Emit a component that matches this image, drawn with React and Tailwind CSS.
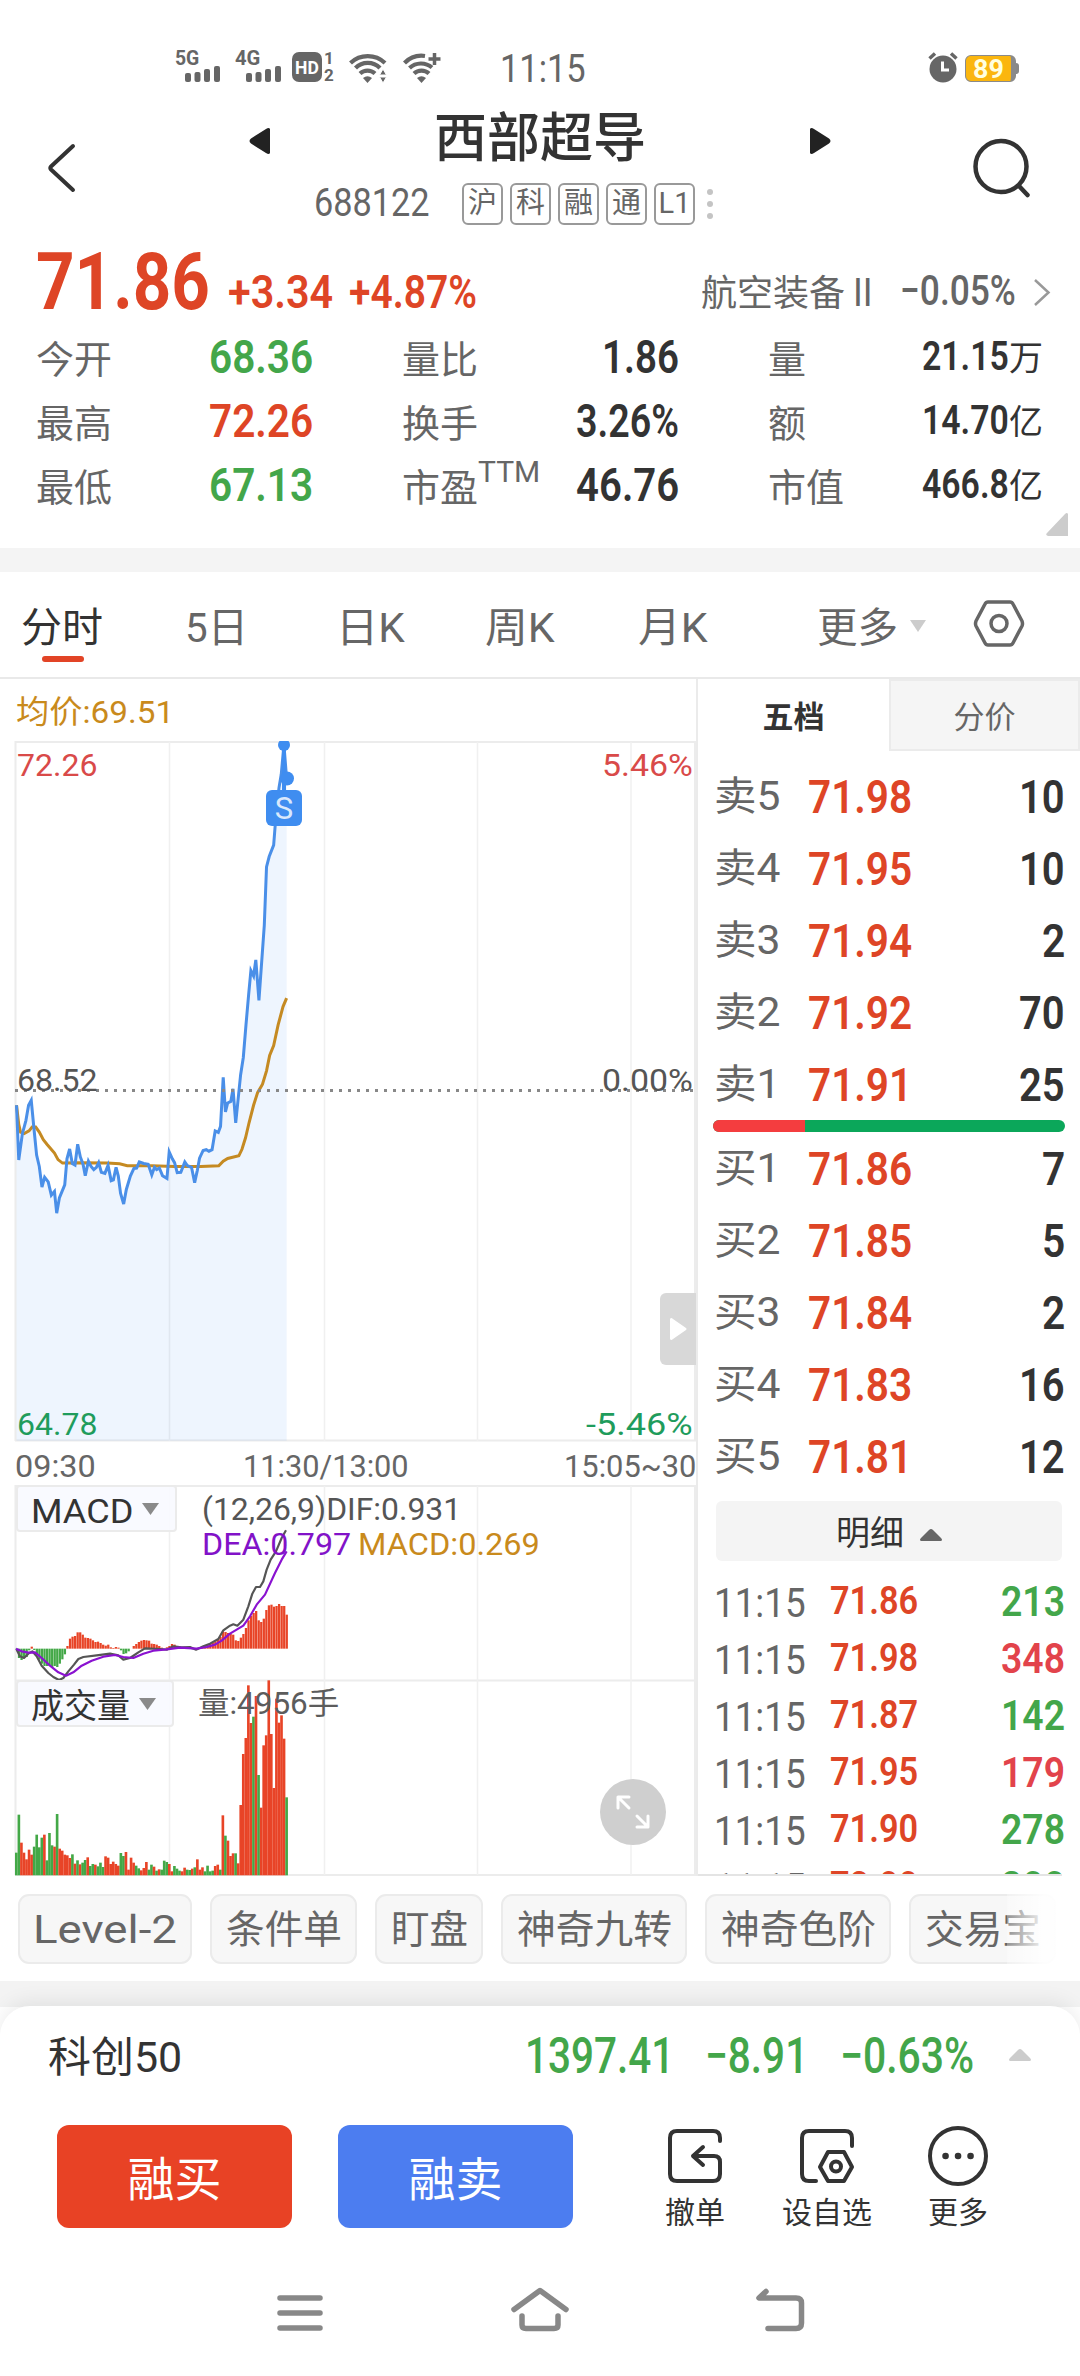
import { useLayoutEffect, useRef, useState } from "react";

/* Text squeezed or stretched horizontally to a set width, like a condensed face. */
function Fit({ w, className = "", children }) {
  const ref = useRef(null);
  const [scale, setScale] = useState(1);
  useLayoutEffect(() => {
    setScale(w / ref.current.offsetWidth);
  }, [w, children]);
  return (
    <span className={`flex shrink-0 leading-none ${className}`} style={{ width: w }}>
      <span
        ref={ref}
        className="inline-block shrink-0 origin-left whitespace-nowrap"
        style={{ transform: `scaleX(${scale})` }}
      >
        {children}
      </span>
    </span>
  );
}

const RED = "text-[#de4526]";
const GREEN = "text-[#43a64a]";

function Signal() {
  return (
    <svg className="mt-3.5 -ml-3.5" width="35" height="16" viewBox="0 0 35 16" fill="#666">
      <rect x="0" y="7" width="6" height="9" rx="2" />
      <rect x="9.5" y="6" width="6" height="10" rx="2" />
      <rect x="19" y="3" width="6" height="13" rx="2" />
      <rect x="29" y="0" width="6" height="16" rx="2" />
    </svg>
  );
}

function Wifi({ plus }) {
  return (
    <svg width="38" height="32" viewBox="0 0 38 32" fill="none" stroke="#666" strokeWidth="4.200">
      {plus ? (
        <>
          <path d="M1.5 11 A24 24 0 0 1 22 4" />
          <path d="M6.5 16 A17 17 0 0 1 29 15.5" />
        </>
      ) : (
        <>
          <path d="M1.5 11 A25 25 0 0 1 36 11" />
          <path d="M6.5 16 A17 17 0 0 1 31 16" />
        </>
      )}
      <path d="M11 21.500 A11 11 0 0 1 26 21.500" />
      <path d="M14 26 Q18.500 22.500 23 26 L18.500 31 Z" fill="#666" stroke="none" />
      {plus ? (
        <path d="M31.500 1 V13 M25.500 7 H37.500" strokeWidth="3.500" />
      ) : (
        <path d="M30.500 23 L34 17 L37.500 23 Z M30.500 25 L34 31 L37.500 25 Z" fill="#666" stroke="#fff" strokeWidth="1" />
      )}
    </svg>
  );
}

function StatusBar() {
  return (
    <div className="flex h-[100px] items-start pt-[52px] pl-[175px] text-[#666]">
      <div className="flex w-[60px]">
        <Fit w={24} className="h-4 -mt-1 text-[21px] font-bold">5G</Fit>
        <Signal />
      </div>
      <div className="flex w-[57px]">
        <Fit w={25} className="h-4 -mt-1 text-[21px] font-bold">4G</Fit>
        <Signal />
      </div>
      <div className="flex h-[30px] w-[30px] items-center justify-center rounded-[7px] bg-[#666]">
        <Fit w={24} className="text-[19px] font-bold text-white">HD</Fit>
      </div>
      <div className="-mt-0.5 ml-0.5 flex w-[25px] flex-col text-[17px] leading-[17px] font-bold">
        <span>1</span>
        <span>2</span>
      </div>
      <Wifi />
      <div className="ml-4">
        <Wifi plus />
      </div>
      <div className="ml-[59px] -mt-0.5">
        <Fit w={86} className="text-[38px]">11:15</Fit>
      </div>
      <svg className="ml-[341px]" width="32" height="31" viewBox="0 0 32 31">
        <circle cx="16" cy="17" r="13.500" fill="#666" />
        <path d="M2.500 6.500 L8 1.500 M29.500 6.500 L24 1.500" stroke="#666" strokeWidth="3.500" />
        <path d="M15.500 9.500 V18 H22" fill="none" stroke="#fff" strokeWidth="3" />
      </svg>
      <div className="mt-[3px] ml-[6px] flex">
        <div className="flex h-[27px] w-[51px] items-center justify-center rounded-[6px] border border-r-[5px] border-[#8a8a8a] bg-[#fbb60e]">
          <Fit w={31} className="text-[26px] font-bold text-[#ffffe0]">89</Fit>
        </div>
        <div className="mt-2 h-[11px] w-[3px] rounded-r bg-[#888]" />
      </div>
    </div>
  );
}

function Header() {
  return (
    <div className="flex h-[132px] text-[#333]">
      <div className="w-[249px] pt-[43px] pl-[46px]">
        <svg width="31" height="50" viewBox="0 0 31 50" fill="none" stroke="#333" strokeWidth="4" strokeLinecap="round" strokeLinejoin="round">
          <path d="M27 3 L5 23.500 Q3.500 25 5 26.500 L27 47" />
        </svg>
      </div>
      <div className="w-[582px]">
        <div className="flex h-[74px] items-center justify-between pt-2">
          <svg width="21" height="26" viewBox="0 0 21 26" fill="#222"><path d="M21 1 V25 Q20 27 17 25 L2 15.500 Q-1 13 2 10.500 L17 1 Q20 -1 21 1Z" /></svg>
          <span className="-mt-1 text-[53px] leading-none font-medium">西部超导</span>
          <svg width="21" height="26" viewBox="0 0 21 26" fill="#222"><path d="M0 1 V25 Q1 27 4 25 L19 15.500 Q22 13 19 10.500 L4 1 Q1 -1 0 1Z" /></svg>
        </div>
        <div className="flex h-[59px] items-center pl-[65px] text-[#666]">
          <Fit w={116} className="text-[39px]">688122</Fit>
          <div className="ml-8 flex gap-[7px]">
            {["沪", "科", "融", "通", "L1"].map((t) => (
              <span key={t} className="flex h-[42px] w-[41px] items-center justify-center rounded-[6px] border-2 border-[#999] text-[29px] leading-none">
                {t}
              </span>
            ))}
          </div>
          <div className="ml-3 flex flex-col gap-[6px]">
            <i className="size-[6px] rounded-full bg-[#c4c4c4]" />
            <i className="size-[6px] rounded-full bg-[#c4c4c4]" />
            <i className="size-[6px] rounded-full bg-[#c4c4c4]" />
          </div>
        </div>
      </div>
      <svg className="mt-[38px] ml-[141px]" width="62" height="62" viewBox="0 0 62 62" fill="none" stroke="#333" strokeWidth="4.500" strokeLinecap="round">
        <circle cx="29" cy="28.500" r="25.500" />
        <path d="M47 48 L55.500 57" />
      </svg>
    </div>
  );
}

const STATS = [
  ["今开", "68.36", GREEN, "量比", "1.86", 77, "量", "21.15", "万"],
  ["最高", "72.26", RED, "换手", "3.26%", 103, "额", "14.70", "亿"],
  ["最低", "67.13", GREEN, "市盈", "46.76", 103, "市值", "466.8", "亿"],
];

function Quote() {
  return (
    <div className="h-[316px] text-[#666]">
      <div className="flex h-[93px] items-start pl-9">
        <Fit w={174} className={`mt-[10px] text-[80px] font-bold ${RED}`}>71.86</Fit>
        <Fit w={105} className={`mt-[37px] ml-[18px] text-[46px] font-semibold ${RED}`}>+3.34</Fit>
        <Fit w={128} className={`mt-[37px] ml-4 text-[46px] font-semibold ${RED}`}>+4.87%</Fit>
        <Fit w={144} className="mt-[44px] ml-[224px] text-[36px]">航空装备</Fit>
        <Fit w={20} className="mt-[42px] ml-2 text-[38px]">II</Fit>
        <Fit w={116} className="mt-[38px] ml-[27px] text-[42px] font-medium">−0.05%</Fit>
        <svg className="mt-[47px] ml-[17px]" width="18" height="28" viewBox="0 0 18 28" fill="none" stroke="#999" strokeWidth="2.500">
          <path d="M2 1 L15.500 13.500 L2 26" />
        </svg>
      </div>
      {STATS.map(([a, av, color, b, bv, bw, c, cv, unit]) => (
        <div key={a} className="flex h-16 items-center pl-9 text-[38px] leading-none">
          <span className="w-[173px] pt-1.5">{a}</span>
          <Fit w={104} className={`text-[46px] font-semibold ${color}`}>{av}</Fit>
          <span className="ml-[89px] flex w-[145px] pt-1.5">
            {b}
            {b === "市盈" && <Fit w={62} className="-mt-3 text-[30px]">TTM</Fit>}
          </span>
          <span className="flex w-[132px] justify-end">
            <Fit w={bw} className="text-[46px] font-semibold text-[#333]">{bv}</Fit>
          </span>
          <span className="ml-[89px] w-[154px] pt-1.5">{c}</span>
          <Fit w={87} className="text-[40px] font-semibold text-[#333]">{cv}</Fit>
          <span className="pt-0.5 text-[34px] text-[#333]">{unit}</span>
        </div>
      ))}
      <div className="flex justify-end pr-3">
        <svg className="-mt-1" width="22" height="23" viewBox="0 0 22 23" fill="#ccc"><path d="M22 1 V23 H2 Q-1 22 1 20 L19 1 Q21 -1 22 1Z" /></svg>
      </div>
    </div>
  );
}

function PeriodTabs() {
  return (
    <div className="flex h-[107px] border-b-2 border-[#e9e9e9] pt-[36px] pl-[21px] text-[41px] leading-none text-[#666]">
      <div className="flex w-[164px] flex-col">
        <span className="text-[#333]">分时</span>
        <i className="mt-[7px] ml-[21px] h-[6px] w-[42px] rounded-full bg-[#e24426]" />
      </div>
      <Fit w={63} className="mr-[88px]">5日</Fit>
      <Fit w={69} className="mr-[80px]">日K</Fit>
      <Fit w={70} className="mr-[83px]">周K</Fit>
      <Fit w={70} className="mr-[109px]">月K</Fit>
      <Fit w={81}>更多</Fit>
      <svg className="mt-3 ml-[11px]" width="18" height="12" viewBox="0 0 18 12" fill="#ccc"><path d="M1 0 H17 L9 12Z" /></svg>
      <svg className="-mt-[9px] ml-[46px]" width="52" height="50" viewBox="0 0 52 50" fill="none" stroke="#666" strokeWidth="3.500" strokeLinejoin="round">
        <path d="M15 3 H37 Q39 3 40 5 L49 22 Q50 25 49 27 L40 44 Q39 46 37 46 H15 Q13 46 12 44 L3 27 Q2 25 3 22 L12 5 Q13 3 15 3Z" />
        <circle cx="26" cy="24.500" r="8" />
      </svg>
    </div>
  );
}

const PRICE =
  "37,1140 42,1283 50,1215 58,1180 64,1140 70,1127 76,1200 82,1270 88,1300 94,1354 100,1328 108,1340 115,1375 122,1365 127,1422 133,1382 145,1348 150,1280 156,1254 162,1292 168,1296 174,1242 180,1275 186,1294 191,1324 198,1286 204,1300 210,1308 216,1302 221,1290 227,1315 235,1318 242,1297 249,1337 254,1335 260,1302 265,1325 270,1370 277,1398 283,1360 292,1325 300,1305 306,1304 312,1288 322,1292 332,1294 340,1322 346,1302 351,1308 357,1304 364,1324 374,1331 379,1262 386,1280 391,1290 397,1316 405,1315 414,1288 420,1298 429,1302 436,1342 442,1310 447,1278 455,1258 462,1256 468,1260 475,1256 482,1207 489,1211 494,1195 500,1067 505,1157 510,1134 517,1130 522,1097 528,1186 539,1060 545,1015 551,930 557,850 562,788 568,802 573,760 580,866 592,670 597,517 603,490 613,460 619,370 625,310 630,275 636,198 642,286";
const AVERAGE =
  "37,1140 42,1190 46,1210 54,1214 65,1207 72,1197 80,1197 88,1210 97,1230 106,1243 122,1265 130,1282 140,1291 180,1290 240,1291 268,1293 285,1298 340,1298 390,1300 450,1300 490,1298 500,1286 510,1279 535,1272 542,1255 550,1225 558,1185 568,1140 577,1107 588,1085 597,1050 604,1010 613,984 623,930 634,882 642,860";
const GRID_X = [169.5, 324.5, 477.5, 631];

function PriceChart() {
  return (
    <div className="relative h-[701px]">
      <svg className="block" width="696" height="701" viewBox="0 0 696 701" fill="none">
        <path d="M15 1 H696 M15 699.500 H696 M15.500 0 V700 M695 0 V700" stroke="#ececec" strokeWidth="2" />
        {GRID_X.map((x) => <path key={x} d={`M${x} 1 V700`} stroke="#f0f0f0" strokeWidth="1.500" />)}
        <g transform="scale(0.44643 0.38265) translate(0 -188)">
          <polygon points={`37,2017 ${PRICE} 642,2017`} fill="#3f8ff0" fillOpacity="0.09" />
          <polyline points={AVERAGE} stroke="#c58a22" strokeWidth="3" vectorEffect="non-scaling-stroke" />
          <polyline points={PRICE} stroke="#4a8fe8" strokeWidth="3" vectorEffect="non-scaling-stroke" />
        </g>
        <path d="M15 349.500 H696" stroke="#888" strokeWidth="2.800" strokeDasharray="3 6" />
        <path d="M284 4 V50" stroke="#3f8df0" strokeWidth="4" />
        <circle cx="284" cy="4" r="6" fill="#3f8df0" />
        <circle cx="287" cy="37.500" r="7" fill="#3f8df0" />
      </svg>
      <div className="absolute inset-0 flex flex-col pr-[3px] pl-[17px] text-[32px]">
        <div className="flex justify-between pt-[8px] text-[#d94a49]">
          <Fit w={80}>72.26</Fit>
          <Fit w={91}>5.46%</Fit>
        </div>
        <div className="mt-[283px] flex justify-between text-[#555]">
          <Fit w={80}>68.52</Fit>
          <Fit w={91}>0.00%</Fit>
        </div>
        <div className="mt-[312px] flex justify-between text-[#1f9c5c]">
          <Fit w={80}>64.78</Fit>
          <Fit w={107}>-5.46%</Fit>
        </div>
      </div>
      <div className="absolute top-[49px] left-[266px] flex size-9 items-center justify-center rounded-[6px] bg-[#3f8df0] text-[31px] leading-none text-[#d9e8fc]">S</div>
      <div className="absolute top-[552px] right-0 flex h-[72px] w-9 items-center justify-center rounded-l-[6px] bg-[#d8d8d8]">
        <svg width="18" height="22" viewBox="0 0 18 22" fill="#fff"><path d="M1 1 Q2 -1 4 1 L17 10 Q18 11 17 12 L4 21 Q2 23 1 21Z" /></svg>
      </div>
    </div>
  );
}

const HIST = [-3, -28, -34, -25, -25, -5, 6, -4, -20, -33, -45, -52, -52, -52, -55, -52, -55, -45, -32, -17, 8, 30, 36, 38, 49, 49, 42, 33, 32, 30, 25, 20, 21, 17, 12, 9, 12, 4, 2, 5, 3, -5, -16, -14, -8, 0, 8, 14, 20, 24, 26, 25, 24, 15, 14, 12, 8, 3, 0, 4, 8, 14, 12, 8, 3, 2, 2, 1, 2, -2, -3, -2, 2, 6, 9, 12, 16, 18, 22, 26, 35, 52, 50, 47, 45, 42, 25, 23, 33, 44, 62, 85, 98, 107, 113, 85, 80, 90, 116, 130, 132, 126, 128, 134, 128, 128, 102];
const VOLUME = [68, 182, 98, 68, 48, 77, 62, 86, 122, 84, 113, 122, 45, 127, 90, 86, 184, 80, 74, 62, 60, 52, 63, 35, 45, 33, 38, 46, 54, 28, 34, 32, 27, 38, 25, 57, 53, 34, 41, 34, 29, 67, 58, 70, 17, 53, 38, 29, 21, 15, 22, 40, 17, 32, 26, 14, 18, 17, 44, 40, 34, 12, 28, 20, 14, 12, 23, 17, 16, 20, 24, 48, 17, 24, 12, 29, 12, 14, 28, 32, 17, 180, 119, 104, 58, 66, 66, 36, 211, 364, 412, 570, 457, 476, 538, 301, 203, 390, 420, 585, 424, 262, 530, 458, 480, 410, 234];
const DOWN = new Set([0, 1, 7, 8, 9, 10, 12, 13, 14, 16, 22, 24, 26, 27, 29, 30, 32, 33, 34, 41, 42, 47, 48, 52, 53, 55, 57, 58, 59, 62, 63, 64, 67, 68, 70, 74, 75, 76, 77, 80, 82, 86, 93, 95, 106]);
const DIF =
  "50,540 60,560 72,565 85,552 97,545 110,560 125,588 145,610 160,622 177,631 190,625 205,605 222,585 235,568 250,562 290,557 330,552 355,557 370,570 390,565 415,548 435,536 480,538 500,540 520,530 545,533 570,532 588,540 610,530 630,522 655,508 670,482 690,468 700,464 712,468 730,450 745,410 757,372 768,352 780,352 790,335 800,300 812,270 828,245 845,205 858,182";
const DEA =
  "48,537 65,545 85,549 105,548 125,565 150,588 175,608 198,618 220,608 245,588 275,573 310,561 345,556 370,562 400,565 430,552 460,543 500,539 540,534 590,537 620,532 645,525 665,513 690,492 710,480 730,468 750,440 770,405 795,375 825,310 845,270 860,245";

function Select({ children, w, className }) {
  return (
    <div className={`flex h-[47px] items-center rounded-[4px] border-2 border-[#ebebeb] bg-[#f8faff]/90 pl-[13px] text-[#333] ${className}`}>
      <Fit w={w} className="pt-1 text-[34px]">{children}</Fit>
      <svg className="ml-[9px]" width="17" height="12" viewBox="0 0 17 12" fill="#8a8a8a"><path d="M0 0 H17 L8.500 12Z" /></svg>
    </div>
  );
}

function Indicators() {
  return (
    <div className="relative h-[391px]">
      <svg className="block" width="696" height="391" viewBox="0 0 696 391" fill="none">
        <path d="M15 1 H696 M15 195.500 H696 M15 390 H696 M15.500 0 V390 M695 0 V390" stroke="#ececec" strokeWidth="2" />
        {GRID_X.map((x) => <path key={x} d={`M${x} 1 V390`} stroke="#f0f0f0" strokeWidth="1.500" />)}
        <g transform="scale(0.33333) translate(0 -46)">
          {HIST.map((v, i) => (
            <rect key={i} x={46 + i * 7.65} y={v > 0 ? 537 - v : 537} width="6.800" height={Math.abs(v)} fill={v > 0 ? "#e84427" : "#43a847"} />
          ))}
          {VOLUME.map((v, i) => (
            <rect key={i} x={45 + i * 7.65} y={1217 - v} width="7.900" height={v} fill={DOWN.has(i) ? "#43a847" : "#e84427"} />
          ))}
          <polyline points={DIF} stroke="#555" strokeWidth="6.500" strokeLinejoin="round" />
          <polyline points={DEA} stroke="#8a12d0" strokeWidth="6.500" strokeLinejoin="round" />
        </g>
      </svg>
      <div className="absolute inset-0 flex flex-col pl-4">
        <div className="flex h-[195px]">
          <Select w={102} className="w-[161px]">MACD</Select>
          <div className="ml-[25px] flex flex-col pt-[8px] text-[32px]">
            <Fit w={259} className="text-[#555]">(12,26,9)DIF:0.931</Fit>
            <div className="mt-[3px] flex gap-[7px]">
              <Fit w={149} className="text-[#8212c8]">DEA:0.797</Fit>
              <Fit w={182} className="text-[#c98a1c]">MACD:0.269</Fit>
            </div>
          </div>
        </div>
        <div className="flex">
          <Select w={99} className="w-[158px]">成交量</Select>
          <Fit w={141} className="mt-2 ml-6 text-[31px] text-[#5c5c5c]">量:4956手</Fit>
        </div>
      </div>
      <div className="absolute top-[294px] left-[600px] flex size-[66px] items-center justify-center rounded-full bg-[#cfcfcf]">
        <svg width="36" height="36" viewBox="0 0 36 36" fill="none" stroke="#fff" strokeWidth="3" strokeLinecap="round" strokeLinejoin="round">
          <path d="M3 14 V3 H14 M3 3 L14 14 M33 22 V33 H22 M33 33 L22 22" />
        </svg>
      </div>
    </div>
  );
}

function ChartPane() {
  return (
    <div className="flex w-[698px] flex-col border-r-2 border-[#ebebeb]">
      <div className="h-[62px] pt-[17px] pl-4 text-[#c98a1c]">
        <Fit w={158} className="text-[32px]">均价:69.51</Fit>
      </div>
      <PriceChart />
      <div className="flex h-[43px] justify-between pt-2 pl-[15px] text-[32px] text-[#666]">
        <Fit w={81}>09:30</Fit>
        <Fit w={166} className="-ml-2">11:30/13:00</Fit>
        <Fit w={132}>15:05~30</Fit>
      </div>
      <Indicators />
    </div>
  );
}

const SELLS = [["卖5", "71.98", "10"], ["卖4", "71.95", "10"], ["卖3", "71.94", "2"], ["卖2", "71.92", "70"], ["卖1", "71.91", "25"]];
const BUYS = [["买1", "71.86", "7"], ["买2", "71.85", "5"], ["买3", "71.84", "2"], ["买4", "71.83", "16"], ["买5", "71.81", "12"]];
const TICKS = [["71.86", "213", 0], ["71.98", "348", 1], ["71.87", "142", 0], ["71.95", "179", 1], ["71.90", "278", 0], ["72.00", "200", 0]];

function OrderRow({ row: [label, price, qty] }) {
  return (
    <div className="flex h-[72px] items-center pr-[15px] pl-4 pt-px text-[#666]">
      <Fit w={66} className="text-[40px]">{label}</Fit>
      <Fit w={104} className={`ml-7 text-[46px] font-semibold ${RED}`}>{price}</Fit>
      <span className="flex flex-1 justify-end text-[46px] font-semibold text-[#333]">
        <Fit w={qty.length * 23}>{qty}</Fit>
      </span>
    </div>
  );
}

function BookPane() {
  return (
    <div className="flex h-[1197px] w-[382px] flex-col">
      <div className="mb-[9px] flex h-[72px] text-[31px] leading-none">
        <div className="flex w-[191px] items-center justify-center pt-1 font-bold text-[#333]">五档</div>
        <div className="flex w-[191px] items-center justify-center border-2 border-[#ebebeb] bg-[#f5f5f5] pt-1 text-[#666]">分价</div>
      </div>
      {SELLS.map((r) => <OrderRow key={r[0]} row={r} />)}
      <div className="mr-[15px] ml-[15px] flex h-3 shrink-0 overflow-hidden rounded-full bg-[#0ba75a]">
        <i className="w-[92px] bg-[#f43d3f]" />
      </div>
      {BUYS.map((r) => <OrderRow key={r[0]} row={r} />)}
      <div className="mx-[18px] mt-[9px] mb-3 flex h-[60px] shrink-0 items-center justify-center gap-4 rounded-[6px] bg-[#f4f4f4] pt-1 text-[34px] leading-none text-[#333]">
        明细
        <svg className="mt-1" width="22" height="12" viewBox="0 0 22 12" fill="#666"><path d="M1 12 Q-1 11 1 9 L9 1 Q11 -1 13 1 L21 9 Q23 11 21 12Z" /></svg>
      </div>
      <div className="flex min-h-0 flex-1 flex-col overflow-hidden">
        {TICKS.map(([price, qty, up]) => (
          <div key={price} className="flex h-[57px] shrink-0 items-center pl-4 text-[#666]">
            <Fit w={92} className="mt-1 text-[40px]">11:15</Fit>
            <Fit w={88} className={`ml-6 text-[39px] font-semibold ${RED}`}>{price}</Fit>
            <Fit w={64} className={`ml-[83px] text-[42px] font-semibold ${up ? "text-[#e2434b]" : GREEN}`}>{qty}</Fit>
          </div>
        ))}
      </div>
      <div className="mr-[18px] h-0.5 shrink-0 bg-[#e4e4e4]" />
    </div>
  );
}

const CHIPS = [["Level-2", 144, "w-[174px]"], ["条件单", 116, "w-[147px]"], ["盯盘", 77, "w-[108px]"], ["神奇九转", 155, "w-[186px]"], ["神奇色阶", 155, "w-[186px]"], ["交易宝", 116, "w-[147px]"]];

function Chips() {
  return (
    <div className="relative flex h-[105px] gap-[18px] pt-[18px] pl-[18px]">
      {CHIPS.map(([t, w, cls]) => (
        <div key={t} className={`flex h-[70px] shrink-0 items-center justify-center rounded-[11px] border-2 border-[#ebebeb] bg-[#f7f7f7] pt-0.5 text-[39px] text-[#666] ${cls}`}>
          <Fit w={w}>{t}</Fit>
        </div>
      ))}
      <div className="absolute top-0 right-0 h-full w-[73px] bg-gradient-to-r from-white/30 via-white/90 to-white" />
    </div>
  );
}

function Action({ label, children, className }) {
  return (
    <div className={`flex flex-col items-center text-[30px] leading-none text-[#333] ${className}`}>
      <svg width="62" height="62" viewBox="0 0 62 62" fill="none" stroke="#333" strokeWidth="4" strokeLinecap="round" strokeLinejoin="round">
        {children}
      </svg>
      <span className="mt-[11px]">{label}</span>
    </div>
  );
}

function TradePanel() {
  return (
    <div className="-mt-px h-[370px] rounded-t-[30px] bg-white shadow-[0_-4px_20px_rgba(0,0,0,0.08)]">
      <div className="flex h-[102px] items-center pl-12">
        <Fit w={134} className="pt-0.5 text-[42px] text-[#333]">科创50</Fit>
        <Fit w={149} className="ml-[343px] -mt-0.5 text-[50px] font-medium text-[#43a64a]">1397.41</Fit>
        <Fit w={103} className="ml-[31px] -mt-0.5 text-[50px] font-medium text-[#43a64a]">−8.91</Fit>
        <Fit w={134} className="ml-[32px] -mt-0.5 text-[50px] font-medium text-[#43a64a]">−0.63%</Fit>
        <svg className="-mt-1 ml-[35px]" width="22" height="12" viewBox="0 0 22 12" fill="#ccc"><path d="M1 12 Q-1 11 1 9 L9 1 Q11 -1 13 1 L21 9 Q23 11 21 12Z" /></svg>
      </div>
      <div className="flex pt-[17px] pl-[57px] text-white">
        <div className="flex h-[103px] w-[235px] items-center justify-center rounded-[12px] bg-[#e84225] pt-1.5 text-[47px] leading-none">融买</div>
        <div className="ml-[46px] flex h-[103px] w-[235px] items-center justify-center rounded-[12px] bg-[#4c7df0] pt-1.5 text-[47px] leading-none">融卖</div>
        <Action label="撤单" className="ml-[92px] w-[60px]">
          <path d="M56 16 V13 Q56 6 49 6 H13 Q6 6 6 13 V49 Q6 56 13 56 H49 Q56 56 56 49 V37 Q56 31 50 31 H29 M39 22 L29 31 L39 40" />
        </Action>
        <Action label="设自选" className="ml-[56px] w-[92px]">
          <path d="M56 21 V13 Q56 6 49 6 H13 Q6 6 6 13 V49 Q6 56 13 56 H20 M32 27 H48 L56 42 L48 56 H32 L24 42 Z" />
          <circle cx="40" cy="41.500" r="5" />
        </Action>
        <Action label="更多" className="ml-[54px] w-[62px]">
          <circle cx="31" cy="31" r="28" />
          <path d="M18.500 31 H18.600 M31 31 H31.100 M43.500 31 H43.600" strokeWidth="6.500" />
        </Action>
      </div>
      <svg className="mt-[58px] ml-[275px]" width="531" height="50" viewBox="0 0 531 50" fill="none" stroke="#888" strokeWidth="5.500" strokeLinecap="round" strokeLinejoin="round">
        <path d="M5 12 H45 M5 27 H45 M5 42 H45" />
        <path d="M239 23.500 L265 4.500 L291 23.500 M247 30 V39 Q247 42.500 251 42.500 H279 Q283 42.500 283 39 V30" />
        <path d="M491 5.500 L484 12 H521 Q526.500 12 526.500 17 V37 Q526.500 42.500 521 42.500 H493" />
      </svg>
    </div>
  );
}

export default function App() {
  return (
    <div className="h-[2376px] w-[1080px] overflow-hidden bg-white font-['Roboto','Noto_Sans_CJK_SC',sans-serif]">
      <StatusBar />
      <Header />
      <Quote />
      <div className="h-6 bg-[#f4f4f4]" />
      <PeriodTabs />
      <div className="flex">
        <ChartPane />
        <BookPane />
      </div>
      <Chips />
      <div className="h-[26px] bg-[#f3f3f3]" />
      <TradePanel />
    </div>
  );
}
